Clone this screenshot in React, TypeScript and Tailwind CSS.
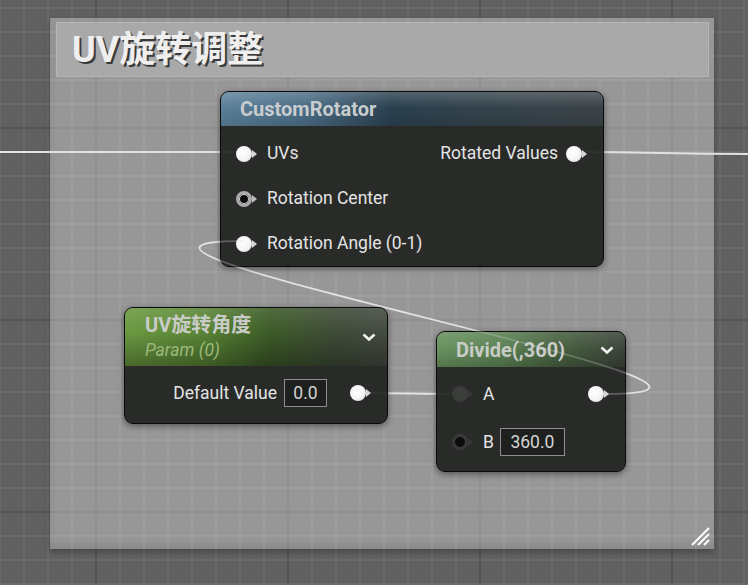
import React from "react";

const font = "font-['Roboto','Noto_Sans_CJK_SC',sans-serif]";

type PinKind = "filled" | "hollow" | "dimFilled" | "dimHollow";

const pinCircle: Record<PinKind, string> = {
  filled:
    "w-[16px] h-[16px] rounded-full bg-[radial-gradient(circle_at_42%_42%,#ffffff_0%,#f4f4f4_55%,#c4c4c4_100%)]",
  hollow:
    "w-[16px] h-[16px] rounded-full border-[3px] border-[#a9a9a9] bg-[#0c0c0c] shadow-[inset_0_0_0_1px_#d8d8d8]",
  dimFilled: "w-[16px] h-[16px] rounded-full bg-[#3b3d3b]",
  dimHollow:
    "w-[16px] h-[16px] rounded-full border-[3px] border-[#383a38] bg-[#0c0c0c]",
};

const pinArrow: Record<PinKind, string> = {
  filled: "border-y-[4px] border-y-transparent border-l-[5px] border-l-[#d6d6d6]",
  hollow: "border-y-[4px] border-y-transparent border-l-[5px] border-l-[#bdbdbd]",
  dimFilled: "border-y-[4px] border-y-transparent border-l-[5px] border-l-[#363836]",
  dimHollow: "border-y-[4px] border-y-transparent border-l-[5px] border-l-[#363836]",
};

const Pin = ({ kind }: { kind: PinKind }) => (
  <div className="flex items-center shrink-0">
    <div className={pinCircle[kind]} />
    <div className={pinArrow[kind]} />
  </div>
);

const Chevron = () => (
  <svg width="16" height="10" viewBox="0 0 16 10">
    <path d="M2.5 2.5 L8 7.5 L13.5 2.5" fill="none" stroke="#f2f2f2" strokeWidth="2.6" />
  </svg>
);

const ValueBox = ({ value, w }: { value: string; w: string }) => (
  <div
    className={`${w} h-[28px] border border-[#8e8e8e] bg-[#1e201e] flex items-center justify-center text-[#d4d4d4] text-[17.5px]`}
  >
    {value}
  </div>
);

const nodeShell =
  "absolute rounded-[9px] border border-[#0b0b0b] bg-[rgba(32,34,31,0.92)] shadow-[0_2px_6px_rgba(0,0,0,0.45)] overflow-hidden flex flex-col";

const CustomRotator = () => (
  <div className={`${nodeShell} left-[220px] top-[91px] w-[384px] h-[176px]`}>
    <div className="h-[34px] shrink-0 flex items-center pl-[19px] [background-image:linear-gradient(180deg,rgba(255,255,255,0.18)_0%,rgba(255,255,255,0)_45%,rgba(0,0,0,0.12)_100%),linear-gradient(90deg,#5b809a_0%,#4b6d86_22%,#2a404f_45%,#33434d_65%,#3c4449_100%)]">
      <span className="text-[20px] font-bold text-[#c8ccce] leading-none">CustomRotator</span>
    </div>
    <div className="flex pt-[5px] text-[17.5px] text-[#e4e4e4]">
      <div className="flex flex-col flex-1">
        {[
          { label: "UVs", kind: "filled" as PinKind },
          { label: "Rotation Center", kind: "hollow" as PinKind },
          { label: "Rotation Angle (0-1)", kind: "filled" as PinKind },
        ].map((row) => (
          <div key={row.label} className="h-[45px] flex items-center pl-[15px] gap-[10px]">
            <Pin kind={row.kind} />
            <span>{row.label}</span>
          </div>
        ))}
      </div>
      <div className="flex flex-col">
        <div className="h-[45px] flex items-center justify-end pr-[16px] gap-[8px]">
          <span>Rotated Values</span>
          <Pin kind="filled" />
        </div>
      </div>
    </div>
  </div>
);

const ParamNode = () => (
  <div className={`${nodeShell} left-[124px] top-[307px] w-[264px] h-[117px]`}>
    <div className="h-[58px] shrink-0 flex items-center justify-between pl-[20px] pr-[10px] [background-image:linear-gradient(180deg,rgba(255,255,255,0.1)_0%,rgba(0,0,0,0)_40%,rgba(0,0,0,0.32)_100%),linear-gradient(90deg,#6c9a42_0%,#5a8636_30%,#3d5c28_55%,#3f4c38_80%,#454c42_100%)]">
      <div className="flex flex-col">
        <span className="text-[20px] font-bold text-[#c9ccc6] leading-[26px]">UV旋转角度</span>
        <span className="text-[17.5px] italic text-[#9cb97a] leading-[24px]">Param (0)</span>
      </div>
      <Chevron />
    </div>
    <div className="flex-1 flex items-center justify-end pr-[16px] pb-[3px] text-[17.5px] text-[#e4e4e4]">
      <span>Default Value</span>
      <div className="ml-[7px] mr-[23px]">
        <ValueBox value="0.0" w="w-[43px]" />
      </div>
      <Pin kind="filled" />
    </div>
  </div>
);

const DivideNode = () => (
  <div className={`${nodeShell} left-[436px] top-[331px] w-[190px] h-[141px]`}>
    <div className="h-[35px] shrink-0 flex items-center justify-between pl-[19px] pr-[10px] [background-image:linear-gradient(180deg,rgba(255,255,255,0.12)_0%,rgba(0,0,0,0)_50%,rgba(0,0,0,0.2)_100%),linear-gradient(90deg,#68925f_0%,#5a8052_35%,#46603f_65%,#3b4339_100%)]">
      <span className="text-[20px] font-bold text-[#c9ccc6] leading-none">Divide(,360)</span>
      <Chevron />
    </div>
    <div className="flex flex-col pt-[3px] text-[17.5px] text-[#e4e4e4]">
      <div className="h-[48px] flex items-center pl-[15px] pr-[16px]">
        <Pin kind="dimFilled" />
        <span className="ml-[10px] flex-1">A</span>
        <Pin kind="filled" />
      </div>
      <div className="h-[48px] flex items-center pl-[15px]">
        <Pin kind="dimHollow" />
        <span className="ml-[10px] mr-[6px]">B</span>
        <ValueBox value="360.0" w="w-[65px]" />
      </div>
    </div>
  </div>
);

const Wires = ({ over }: { over?: boolean }) => (
  <svg
    className={over ? "absolute inset-0 opacity-25 pointer-events-none" : "absolute inset-0"}
    width="748"
    height="585"
    viewBox="0 0 748 585"
  >
    <g fill="none" stroke="#e2e2e2" strokeWidth="1.8">
      {!over && <path d="M0 152 L244 152" />}
      {!over && <path d="M574 152 C660 152 662 154 748 154" />}
      {!over && <path d="M359 393 C400 393 420 394 460 394" />}
      <path d="M605 394 C849 394 0 241 244 241" />
    </g>
  </svg>
);

export default function App() {
  return (
    <div
      className={`${font} relative w-[748px] h-[585px] overflow-hidden bg-[#606060] [background-image:linear-gradient(90deg,#555555_0_2px,transparent_2px),linear-gradient(180deg,#555555_0_2px,transparent_2px),linear-gradient(90deg,#6a6a6a_0_2px,transparent_2px),linear-gradient(180deg,#6a6a6a_0_2px,transparent_2px)] [background-size:192px_192px,192px_192px,24px_24px,24px_24px] [background-position:95px_0,0_127px,23px_0,0_7px]`}
    >
      {/* comment box */}
      <div className="absolute left-[50px] top-[18px] w-[664px] h-[531px] bg-white/35 shadow-[0_3px_6px_rgba(0,0,0,0.25),inset_5px_-10px_8px_-6px_rgba(0,0,0,0.1)] flex flex-col pt-[4px] pl-[6px] pr-[5px]">
        <div className="h-[55px] bg-[#a9a9a9] border border-[#b6b6b6] flex items-center pl-[15px]">
          <span className="text-[36px] font-bold text-[#efefef] leading-none [text-shadow:2px_2px_0_#3a3a3a]">
            UV旋转调整
          </span>
        </div>
        <svg className="absolute right-[4px] bottom-[3px]" width="20" height="20" viewBox="0 0 20 20">
          <g stroke="#ffffff" strokeWidth="2">
            <path d="M2 19 L19 2" />
            <path d="M8 19 L19 8" />
            <path d="M14 19 L19 14" />
          </g>
        </svg>
      </div>
      <Wires />
      <CustomRotator />
      <ParamNode />
      <DivideNode />
      <Wires over />
    </div>
  );
}
